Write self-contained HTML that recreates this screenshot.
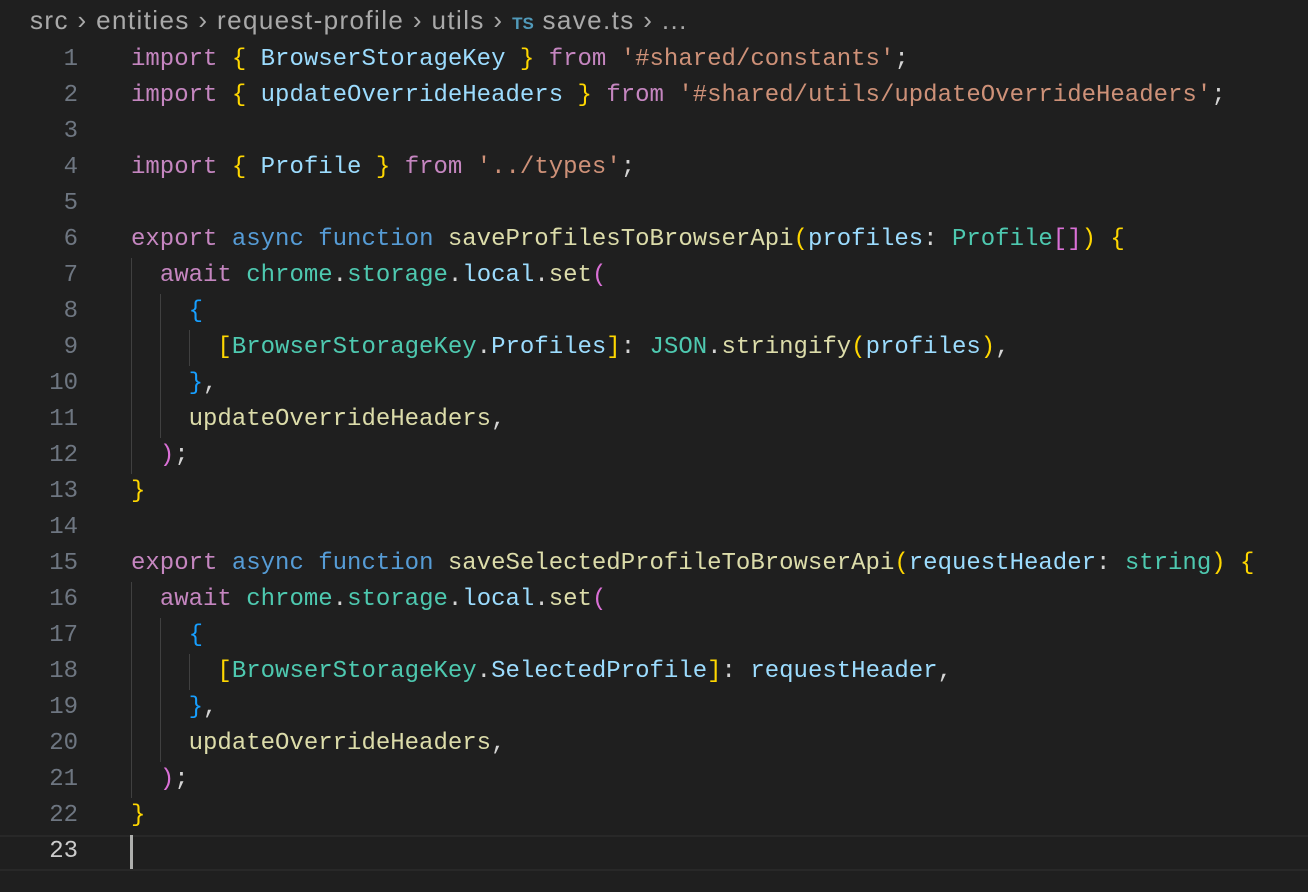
<!DOCTYPE html>
<html><head><meta charset="utf-8"><style>
html,body{margin:0;padding:0;background:#1f1f1f;width:1308px;height:892px;overflow:hidden}
.bc{position:absolute;left:30px;top:4px;font-family:"Liberation Sans",sans-serif;font-size:26px;color:#a9a9a9;letter-spacing:1.4px;white-space:pre;line-height:32px}
.bc .ts{color:#519aba;font-size:17px;font-weight:bold;letter-spacing:0}
.ln{position:absolute;left:0;width:78px;text-align:right;font-family:"Liberation Mono",monospace;font-size:24px;color:#6e7681;line-height:36px}
.code{position:absolute;left:131px;top:42px;font-family:"Liberation Mono",monospace;font-size:24px;line-height:36px;color:#d4d4d4}
.code div{height:36px;white-space:pre}
.k{color:#c586c0}.b{color:#569cd6}.v{color:#9cdcfe}.f{color:#dcdcaa}.s{color:#ce9178}.t{color:#4ec9b0}
.y{color:#ffd700}.p{color:#da70d6}.bl{color:#179fff}
.g{position:absolute;width:1px;background:#404040}
.cur{position:absolute;left:0;right:0;top:835px;height:32px;border-top:2px solid #282828;border-bottom:2px solid #282828}
</style></head><body>
<div class="bc">src › entities › request-profile › utils › <span class="ts">TS</span> save.ts › ...</div>
<div class="cur"></div>
<div style="position:absolute;left:130px;top:835px;width:3px;height:34px;background:#aeafad"></div>
<div class="g" style="left:131px;top:258px;height:216px"></div>
<div class="g" style="left:160px;top:294px;height:144px"></div>
<div class="g" style="left:189px;top:330px;height:36px"></div>
<div class="g" style="left:131px;top:582px;height:216px"></div>
<div class="g" style="left:160px;top:618px;height:144px"></div>
<div class="g" style="left:189px;top:654px;height:36px"></div>
<div class="ln" style="top:42px">1<br>2<br>3<br>4<br>5<br>6<br>7<br>8<br>9<br>10<br>11<br>12<br>13<br>14<br>15<br>16<br>17<br>18<br>19<br>20<br>21<br>22<br><span style="color:#cccccc">23</span></div>
<div class="code"><div><span class="k">import</span> <span class="y">{</span> <span class="v">BrowserStorageKey</span> <span class="y">}</span> <span class="k">from</span> <span class="s">'#shared/constants'</span>;</div><div><span class="k">import</span> <span class="y">{</span> <span class="v">updateOverrideHeaders</span> <span class="y">}</span> <span class="k">from</span> <span class="s">'#shared/utils/updateOverrideHeaders'</span>;</div><div></div><div><span class="k">import</span> <span class="y">{</span> <span class="v">Profile</span> <span class="y">}</span> <span class="k">from</span> <span class="s">'../types'</span>;</div><div></div><div><span class="k">export</span> <span class="b">async</span> <span class="b">function</span> <span class="f">saveProfilesToBrowserApi</span><span class="y">(</span><span class="v">profiles</span>: <span class="t">Profile</span><span class="p">[]</span><span class="y">)</span> <span class="y">{</span></div><div>  <span class="k">await</span> <span class="t">chrome</span>.<span class="t">storage</span>.<span class="v">local</span>.<span class="f">set</span><span class="p">(</span></div><div>    <span class="bl">{</span></div><div>      <span class="y">[</span><span class="t">BrowserStorageKey</span>.<span class="v">Profiles</span><span class="y">]</span>: <span class="t">JSON</span>.<span class="f">stringify</span><span class="y">(</span><span class="v">profiles</span><span class="y">)</span>,</div><div>    <span class="bl">}</span>,</div><div>    <span class="f">updateOverrideHeaders</span>,</div><div>  <span class="p">)</span>;</div><div><span class="y">}</span></div><div></div><div><span class="k">export</span> <span class="b">async</span> <span class="b">function</span> <span class="f">saveSelectedProfileToBrowserApi</span><span class="y">(</span><span class="v">requestHeader</span>: <span class="t">string</span><span class="y">)</span> <span class="y">{</span></div><div>  <span class="k">await</span> <span class="t">chrome</span>.<span class="t">storage</span>.<span class="v">local</span>.<span class="f">set</span><span class="p">(</span></div><div>    <span class="bl">{</span></div><div>      <span class="y">[</span><span class="t">BrowserStorageKey</span>.<span class="v">SelectedProfile</span><span class="y">]</span>: <span class="v">requestHeader</span>,</div><div>    <span class="bl">}</span>,</div><div>    <span class="f">updateOverrideHeaders</span>,</div><div>  <span class="p">)</span>;</div><div><span class="y">}</span></div><div></div></div>
</body></html>
